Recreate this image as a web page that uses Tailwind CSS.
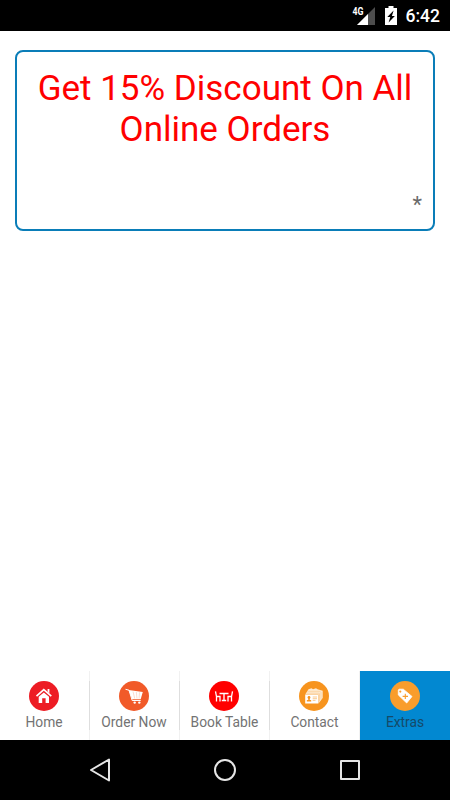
<!DOCTYPE html>
<html lang="en">
<head>
  <meta charset="UTF-8" />
  <meta name="viewport" content="width=device-width, initial-scale=1.0" />
  <title>Extras</title>
  <script src="https://cdn.jsdelivr.net/npm/@tailwindcss/browser@4"></script>
</head>
<body class="bg-white font-['Roboto',sans-serif]">

  <div class="w-[450px] h-[800px] flex flex-col overflow-hidden">

    <!-- Status Bar -->
    <header class="h-[31px] shrink-0 bg-black text-white flex items-center justify-end pr-[10px]">
      <svg class="w-[24px] h-[20px] mr-[9px]" viewBox="0 0 24 20">
        <path d="M5 19 23 1V19Z" fill="#4d4d4d" />
        <path d="M5 19 16 8V19Z" fill="#fff" />
        <path d="M0 0H13V10H0Z" fill="#000" />
        <text x="0.5" y="9" font-size="10" font-weight="700" fill="#fff" textLength="11" lengthAdjust="spacingAndGlyphs">4G</text>
      </svg>
      <svg class="w-[12px] h-[19px] mr-[9px]" viewBox="0 0 12 19">
        <path d="M3.5 0H8.5V2H12V19H0V2H3.5Z" fill="#fff" />
        <path d="M8.6 4.5 2.3 11H5.3L3.6 16.5 9.9 10H6.9Z" fill="#000" />
      </svg>
      <span class="text-[17.5px] leading-none font-medium mt-[2px]">6:42</span>
    </header>

    <!-- Offer -->
    <main class="flex-1 px-[15px] pt-[19px]">
      <div class="h-[181px] border-2 border-[#0a7db8] rounded-lg pt-[16px] flex flex-col">
        <h1 class="text-center text-[35px] leading-[41px] text-[#ff0000]">Get 15% Discount On All<br />Online Orders</h1>
        <p class="mt-[42px] pr-[11px] text-right text-[22px] leading-[26px] text-[#6b6b6b]">*</p>
      </div>
    </main>

    <!-- Tabs -->
    <nav class="h-[69px] shrink-0 grid grid-cols-5 text-[13.8px] leading-[16px] text-[#737373]">
      <a class="relative flex flex-col items-center pt-[10px] pr-[2px]">
        <svg class="w-[30px] h-[30px]" viewBox="0 0 30 30">
          <circle cx="15" cy="15" r="15" fill="#ed1c24" />
          <path d="M7.5 15.2 14.8 8.7 22.3 15.2" fill="none" stroke="#fff" stroke-width="1.7" />
          <path d="M18.6 8H20.4V12.6L18.6 11Z" fill="#fff" />
          <path d="M9.7 15.7 14.8 11.4 20 15.7V22H16.6V17.3H13.2V22H9.7Z" fill="#fff" />
        </svg>
        <span class="mt-[3px]">Home</span>
        <i class="absolute right-0 top-0 h-full w-px bg-[#f1f1f1]"></i>
        <i class="absolute right-0 top-[10px] h-[49px] w-px bg-[#dedede]"></i>
      </a>
      <a class="relative flex flex-col items-center pt-[10px] pr-[2px]">
        <svg class="w-[30px] h-[30px]" viewBox="0 0 30 30">
          <circle cx="15" cy="15" r="15" fill="#f15a29" />
          <path d="M6.5 8.3 10 9.2 13.2 19.5H21.7" fill="none" stroke="#fff" stroke-width="1" />
          <path d="M9.6 8.9 23.8 11.1 21.7 18.3H13.2Z" fill="#fff" />
          <path d="M14 10.5 15.7 17.5M17.3 11 18 17.5M20.5 11.3 20.1 17.5" stroke="#f7a488" stroke-width=".4" />
          <circle cx="15.7" cy="21.6" r="1.2" fill="#fff" />
          <circle cx="20.3" cy="21.6" r="1.2" fill="#fff" />
        </svg>
        <span class="mt-[3px]">Order Now</span>
        <i class="absolute right-0 top-0 h-full w-px bg-[#f1f1f1]"></i>
        <i class="absolute right-0 top-[10px] h-[49px] w-px bg-[#dedede]"></i>
      </a>
      <a class="relative flex flex-col items-center pt-[10px] pr-[2px]">
        <svg class="w-[30px] h-[30px]" viewBox="0 0 30 30">
          <circle cx="15" cy="15" r="15" fill="#ff0000" />
          <g fill="none" stroke="#fff" stroke-width="1.3">
            <path d="M6.5 10.3 7.5 15.7V20.6M7.5 15.5H11V20.6" />
            <path d="M23.5 10.3 22.5 15.7V20.6M22.5 15.5H19V20.6" />
            <path d="M10.5 12.5H19.5M15 12.5V20M12.8 19.5H17.2" />
          </g>
        </svg>
        <span class="mt-[3px] pl-[1px]">Book Table</span>
        <i class="absolute right-0 top-0 h-full w-px bg-[#f1f1f1]"></i>
        <i class="absolute right-0 top-[10px] h-[49px] w-px bg-[#dedede]"></i>
      </a>
      <a class="relative flex flex-col items-center pt-[10px] pr-[2px]">
        <svg class="w-[30px] h-[30px]" viewBox="0 0 30 30">
          <circle cx="15" cy="15" r="15" fill="#f7941e" />
          <path d="M6.2 13.5 9.5 8.3 12.5 7.3 14 8.2 17 7.3 18.5 8.3 23.7 9.7V17L19.5 22.4V13.5Z" fill="#fdebd3" />
          <path d="M7.5 12.2H20.3M8.5 10.3H21.5M20.5 12.5V20.5M22 11V18.5" fill="none" stroke="#f9bd75" stroke-width=".5" />
          <path d="M6.2 13.7H19.3V22.5H6.2Z" fill="#fff" />
          <circle cx="10" cy="16.5" r="1.4" fill="#f7941e" />
          <path d="M9.3 17H10.7V18.8L12.2 19.3V20.5H7.8V19.3L9.3 18.8Z" fill="#f7941e" />
          <path d="M13.7 16H18M13.7 17.7H18M13.7 19.4H16.5" stroke="#f9bd75" stroke-width=".8" />
        </svg>
        <span class="mt-[3px] pl-[1px]">Contact</span>
        <i class="absolute right-0 top-0 h-full w-px bg-[#f1f1f1]"></i>
      </a>
      <a class="flex flex-col items-center pt-[10px] bg-[#0288d1] text-[#154a68]">
        <svg class="w-[30px] h-[30px]" viewBox="0 0 30 30">
          <circle cx="15" cy="15" r="15" fill="#f99d2c" />
          <path d="M9 8.2H13.3L22 15.5 16.7 22 8.3 14V9Z" fill="#fff" stroke="#fff" stroke-width=".8" stroke-linejoin="round" />
          <circle cx="10.3" cy="10.6" r="1.1" fill="#f99d2c" />
          <path d="M15.3 12.7V18.1M12.6 15.4H18" stroke="#f99d2c" stroke-width="1.1" />
        </svg>
        <span class="mt-[3px]">Extras</span>
      </a>
    </nav>

    <!-- System Navigation -->
    <footer class="h-[60px] shrink-0 bg-black flex items-center justify-between px-[89px]">
      <svg class="w-[22px] h-[24px]" viewBox="0 0 22 24" fill="none" stroke="#e6e6e6" stroke-width="2" stroke-linejoin="round">
        <path d="M20 1.5V22.5L2 12Z" />
      </svg>
      <svg class="w-[22px] h-[22px]" viewBox="0 0 22 22" fill="none" stroke="#e6e6e6" stroke-width="2">
        <circle cx="11" cy="11" r="10" />
      </svg>
      <svg class="w-[22px] h-[22px]" viewBox="0 0 22 22" fill="none" stroke="#e6e6e6" stroke-width="2" stroke-linejoin="round">
        <path d="M2 2H20V20H2Z" />
      </svg>
    </footer>

  </div>
</body>
</html>
